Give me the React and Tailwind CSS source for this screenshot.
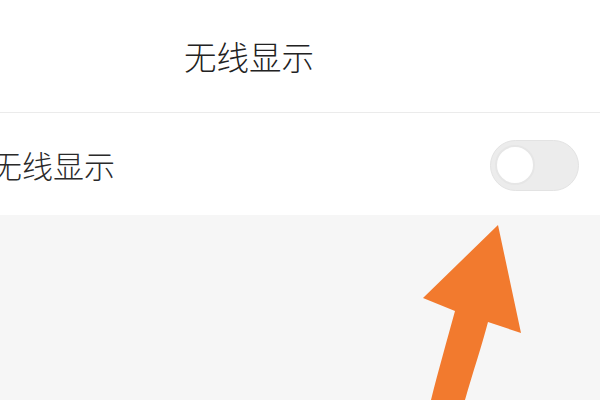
export default function App() {
  return (
    <div
      className="relative w-[600px] h-[400px] overflow-hidden bg-[#f6f6f6] text-[#222]"
      style={{ fontFamily: '"Noto Sans CJK SC", "Noto Sans", sans-serif' }}
    >
      {/* title bar */}
      <div className="h-[113px] bg-white flex items-center pl-[184px] border-b border-[#ebebeb]">
        <span className="text-[32.5px] font-light leading-none">无线显示</span>
      </div>

      {/* setting row */}
      <div className="h-[102px] bg-white flex items-center">
        <span className="-ml-[9px] text-[31px] font-light leading-none text-[#2a2a2a]">无线显示</span>
        <div className="ml-auto mr-[21px] mt-[2px] w-[89px] h-[51px] rounded-full bg-[#ececec] border border-[#e3e3e3] flex items-center pl-[4px]">
          <div className="w-[40px] h-[40px] rounded-full bg-white border-2 border-[#e6e6e6]" />
        </div>
      </div>

      {/* arrow overlay */}
      <svg className="absolute left-0 top-0" width="600" height="400" viewBox="0 0 600 400">
        <path
          d="M498 225 L521 333 L488 322 C482 345 473 372 465 400 L431 400 C438 372 447 340 455 311 L423 298 Z"
          fill="#f27a2e"
        />
      </svg>
    </div>
  );
}
